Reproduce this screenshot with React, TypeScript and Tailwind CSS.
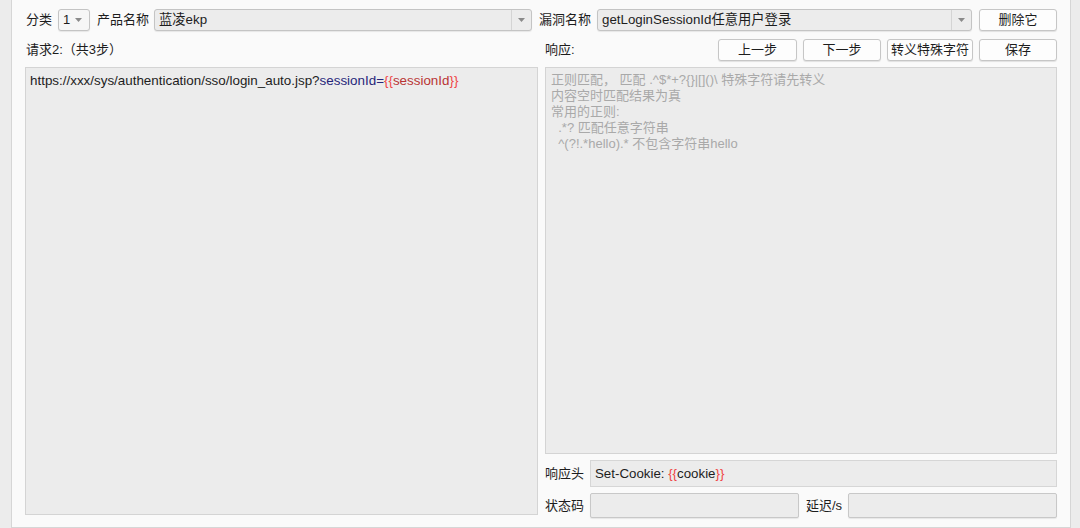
const font = { fontFamily: '"Liberation Sans", "Noto Sans CJK SC", sans-serif' }

function Select({ value, className }: { value: string; className: string }) {
  return (
    <div
      className={`flex h-[22px] items-center rounded-[3px] border border-[#c4c4c4] bg-[#ececec] shadow-[0_1px_1px_rgba(0,0,0,0.08)] ${className}`}
    >
      <span className="flex-1 truncate pl-[4px] text-[13.3px] text-[#1d1d1d]">{value}</span>
      <div className="flex h-full w-[20px] items-center justify-center border-l border-[#d4d4d4]">
        <svg width="7" height="4" viewBox="0 0 7 4">
          <path d="M0 0h7L3.5 4z" fill="#8a8a8a" />
        </svg>
      </div>
    </div>
  )
}

function SmallSelect() {
  return (
    <div className="flex h-[22px] w-[32px] items-center rounded-[3px] border border-[#c4c4c4] bg-[#f6f6f6] shadow-[0_1px_1px_rgba(0,0,0,0.08)]">
      <span className="pl-[4px] text-[13px] text-[#1d1d1d]">1</span>
      <svg className="ml-[5px]" width="7" height="4" viewBox="0 0 7 4">
        <path d="M0 0h7L3.5 4z" fill="#8a8a8a" />
      </svg>
    </div>
  )
}

function Button({ label, className = '' }: { label: string; className?: string }) {
  return (
    <button
      className={`flex h-[22px] items-center justify-center rounded-[3px] border border-[#c6c6c6] bg-[#fdfdfd] text-[13px] text-[#1d1d1d] shadow-[0_1px_1px_rgba(0,0,0,0.1)] ${className}`}
    >
      {label}
    </button>
  )
}

export default function App() {
  return (
    <div className="flex h-[528px] w-[1080px] bg-[#ececec] text-[#1d1d1d]" style={font}>
      <div className="w-[11px] shrink-0" />
      <div className="flex h-[528px] w-[1060px] shrink-0 flex-col border-x border-b border-[#d6d6d6] bg-[#fafafa] pl-[13px] pr-[12px] pt-[9px]">
        {/* Top row */}
        <div className="flex h-[22px] items-center text-[13px]">
          <span className="ml-[1px] w-[32px]">分类</span>
          <SmallSelect />
          <span className="ml-[7px] w-[57px]">产品名称</span>
          <Select value="蓝凌ekp" className="w-[378px]" />
          <span className="ml-[7px] w-[58px]">漏洞名称</span>
          <Select value="getLoginSessionId任意用户登录" className="w-[375px]" />
          <Button label="删除它" className="ml-[7px] w-[78px]" />
        </div>

        {/* Second row */}
        <div className="mt-[8px] grid h-[22px] grid-cols-[513px_512px] gap-x-[7px] text-[13px]">
          <div className="flex items-center pl-[1px]">请求2:（共3步）</div>
          <div className="flex items-center">
            <span>响应:</span>
            <div className="ml-auto flex gap-[6px]">
              <Button label="上一步" className="w-[79px]" />
              <Button label="下一步" className="w-[78px]" />
              <Button label="转义特殊字符" className="w-[86px]" />
              <Button label="保存" className="w-[78px]" />
            </div>
          </div>
        </div>

        {/* Editors */}
        <div className="mt-[6px] grid grid-cols-[513px_512px] gap-x-[7px]">
          <div className="h-[448px] border border-[#d4d4d4] bg-[#ececec] px-[4px] pt-[4px] text-[13.4px] leading-[17px]">
            https://xxx/sys/authentication/sso/login_auto.jsp?
            <span className="text-[#26267a]">sessionId=</span>
            <span className="text-[#f04545]">{'{{'}</span>
            <span className="text-[#b93434]">sessionId</span>
            <span className="text-[#f04545]">{'}}'}</span>
          </div>
          <div className="flex flex-col">
            <div className="h-[387px] whitespace-pre border border-[#d4d4d4] bg-[#ececec] px-[5px] pt-[4px] text-[13px] leading-[16px] text-[#a9a9a9]">
              {'正则匹配， 匹配 .^$*+?{}|[]()\\ 特殊字符请先转义\n内容空时匹配结果为真\n常用的正则:\n  .*? 匹配任意字符串\n  ^(?!.*hello).* 不包含字符串hello'}
            </div>
            <div className="mt-[6px] flex h-[27px] items-center text-[13px]">
              <span className="w-[45px]">响应头</span>
              <div className="flex h-[27px] flex-1 items-center border border-[#d6d6d6] bg-[#ececec] px-[4px] text-[13.3px]">
                Set-Cookie:&nbsp;<span className="text-[#f04545]">{'{{'}</span>cookie
                <span className="text-[#f04545]">{'}}'}</span>
              </div>
            </div>
            <div className="mt-[6px] flex h-[25px] items-center text-[13px]">
              <span className="w-[45px]">状态码</span>
              <div className="h-[25px] w-[209px] rounded-[2px] border border-[#c8c8c8] bg-[#ececec] shadow-[0_1px_1px_rgba(0,0,0,0.08)]" />
              <span className="ml-[7px] w-[42px]">延迟/s</span>
              <div className="h-[25px] flex-1 rounded-[2px] border border-[#c8c8c8] bg-[#ececec] shadow-[0_1px_1px_rgba(0,0,0,0.08)]" />
            </div>
          </div>
        </div>
      </div>
      <div className="flex-1" />
    </div>
  )
}
